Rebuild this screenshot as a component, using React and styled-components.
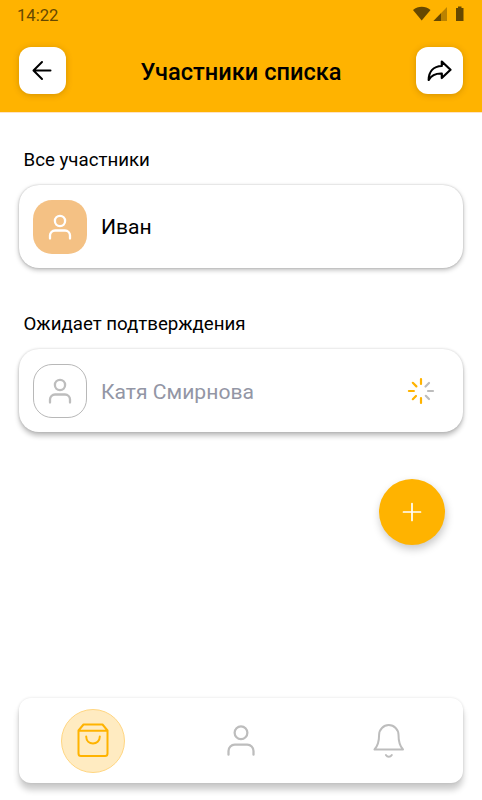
import React from 'react';
import styled, { createGlobalStyle } from 'styled-components';

const GlobalStyle = createGlobalStyle`
  * { box-sizing: border-box; }
  body { margin: 0; background: #fff; font-family: Roboto, sans-serif; color: #000; }
  button { border: 0; padding: 0; font: inherit; cursor: pointer; }
  svg { display: block; fill: none; stroke: currentColor; stroke-linecap: round; stroke-linejoin: round; }
`;

const Screen = styled.div`
  width: 482px;
  height: 800px;
  display: flex;
  flex-direction: column;
  overflow: hidden;
  background: #fff;
`;

const Header = styled.header`
  height: 112px;
  flex: none;
  background: #ffb300;
  box-shadow: 0 1px 0 #ffe3c4;
`;

const StatusBar = styled.div`
  height: 47px;
  padding: 6px 17px 0 17px;
  display: flex;
  align-items: flex-start;
  justify-content: space-between;
  color: #664800;
`;

const Clock = styled.span`
  padding-top: 1px;
  font-size: 16.6px;
  line-height: 18px;
`;

const TitleRow = styled.div`
  display: flex;
  align-items: center;
  justify-content: space-between;
  padding: 0 19px;
`;

const SquareButton = styled.button`
  width: 47px;
  height: 47px;
  display: grid;
  place-items: center;
  border-radius: 12px;
  background: #fff;
  color: #000;
  box-shadow: 0 1px 6px rgba(110, 70, 0, 0.3);
`;

const Title = styled.h1`
  margin: 2px 0 0;
  font-size: 23.6px;
  line-height: 28px;
  font-weight: 500;
  white-space: nowrap;
`;

const Content = styled.main`
  flex: 1;
  display: flex;
  flex-direction: column;
  padding: 38px 19px 0;
`;

const Section = styled.section`
  margin-bottom: 46px;
`;

const SectionTitle = styled.h2`
  margin: 0 0 14px 4.5px;
  font-size: 18.7px;
  line-height: 21px;
  font-weight: 400;
`;

const MemberCard = styled.div`
  height: 83px;
  display: flex;
  align-items: center;
  gap: 14px;
  padding: 0 28px 0 14px;
  border-radius: 20px;
  background: #fff;
  box-shadow: ${({ $pending }) =>
    $pending
      ? '0 4px 5px rgba(0, 0, 0, 0.24), 0 0 3px rgba(0, 0, 0, 0.18)'
      : '0 2px 5px rgba(0, 0, 0, 0.27), 0 0 2px rgba(0, 0, 0, 0.2)'};
`;

const Avatar = styled.div`
  width: 54px;
  height: 54px;
  flex: none;
  display: grid;
  place-items: center;
  border-radius: 19px;
  background: ${({ $pending }) => ($pending ? '#fff' : '#f4c184')};
  color: ${({ $pending }) => ($pending ? '#bdbdbd' : '#fff')};
  border: ${({ $pending }) => ($pending ? '1px solid #b8b8b8' : '0')};
`;

const MemberName = styled.span`
  flex: 1;
  padding-top: ${({ $pending }) => ($pending ? '2px' : '0')};
  font-size: 21.1px;
  line-height: 26px;
  color: ${({ $pending }) => ($pending ? '#9396a5' : '#000')};
`;

const AddButton = styled.button`
  width: 66px;
  height: 66px;
  align-self: flex-end;
  margin: 1px 18.5px 0 0;
  display: grid;
  place-items: center;
  border-radius: 50%;
  background: #ffb300;
  color: #fff;
  box-shadow: 1px 4px 8px rgba(0, 0, 0, 0.22);
`;

const BottomNav = styled.nav`
  height: 85px;
  flex: none;
  margin: 0 19px 17px;
  display: grid;
  grid-template-columns: repeat(3, 1fr);
  align-items: center;
  justify-items: center;
  border-radius: 12px;
  background: #fff;
  box-shadow: 0 7px 6px rgba(0, 0, 0, 0.2), 0 0 3px rgba(0, 0, 0, 0.12);
`;

const NavItem = styled.button`
  width: 64px;
  height: 64px;
  display: grid;
  place-items: center;
  border-radius: 50%;
  background: ${({ $active }) => ($active ? '#ffebc1' : 'transparent')};
  border: ${({ $active }) => ($active ? '1px solid #ffd681' : '1px solid transparent')};
  color: ${({ $active }) => ($active ? '#ffb300' : '#bdbdbd')};
`;

const StatusIcons = () => (
  <svg width="52" height="18" viewBox="0 0 52 18" aria-hidden="true">
    <g stroke="none" fill="currentColor">
      <path d="M0 4C5.200-.200 12.300-.200 17.500 4L8.700 14.500Z" />
      <path d="M34 1V15H20.500Z" opacity=".45" />
      <path d="M28 7.200V15H20.500Z" />
      <path d="M43 2h2V.5h3.500V2h2v13H43Z" />
    </g>
  </svg>
);

const BackIcon = () => (
  <svg width="21" height="21" viewBox="0 0 21 21" strokeWidth="2">
    <path d="M18.500 10.500H2M10 2 1.500 10.500 10 19" />
  </svg>
);

const ShareIcon = () => (
  <svg width="25" height="21" viewBox="0 0 25 21" strokeWidth="2.200">
    <path d="M14.800 1.500 23.500 9.800 14.800 18V13.500C9 13.300 4.500 15.100 1.700 20 1.700 11.500 6.500 6.300 14.800 6Z" />
  </svg>
);

const PersonIcon = ({ large }) => (
  <svg width={large ? 30 : 24} height={large ? 33.75 : 26} viewBox={large ? '0 0 24 27' : '0 0 24 26'} strokeWidth={large ? 1.8 : 2.3}>
    <circle cx="12" cy="7" r="5.100" />
    <path d="M2 24.500v-3a5 5 0 0 1 5-5h10a5 5 0 0 1 5 5v3" />
  </svg>
);

const Spinner = () => (
  <svg width="28" height="28" viewBox="0 0 28 28" strokeWidth="2.200">
    <g color="#bdbdbd" stroke="currentColor">
      <path d="M21 14h5M18.500 9.500l3.500-3.500M18.800 18.800l3.200 3.200" />
    </g>
    <g color="#ffb300" stroke="currentColor">
      <path d="M14 2v5M14 21v5M1.900 14h5M5.800 5.800l3.600 3.600M5.800 22.200l3.200-3.200" />
    </g>
  </svg>
);

const PlusIcon = () => (
  <svg width="20" height="20" viewBox="0 0 20 20" strokeWidth="1.700">
    <path d="M10 1.500v17M1.500 10h17" />
  </svg>
);

const BagIcon = () => (
  <svg width="32" height="35" viewBox="0 0 32 35" strokeWidth="2">
    <path d="M6.500 1.500h19l5 6v23a2.500 2.500 0 0 1-2.500 2.500H4a2.500 2.500 0 0 1-2.500-2.500v-23ZM1.500 7.700h29M9.200 13.500c0 9.200 13.600 9.200 13.600 0" />
  </svg>
);

const BellIcon = () => (
  <svg width="32" height="34" viewBox="0 0 32 34" strokeWidth="2">
    <path d="M1.500 25.500h28.500c-3.500-3.700-4.500-7.500-4.500-14.700a9.700 9.700 0 0 0-19.400 0c0 7.200-1.100 11-4.600 14.700ZM12.900 31c1.500 2.400 4.400 2.400 5.900 0" />
  </svg>
);

export default function App() {
  return (
    <Screen>
      <GlobalStyle />
      <Header>
        <StatusBar>
          <Clock>14:22</Clock>
          <StatusIcons />
        </StatusBar>
        <TitleRow>
          <SquareButton aria-label="Назад"><BackIcon /></SquareButton>
          <Title>Участники списка</Title>
          <SquareButton aria-label="Поделиться"><ShareIcon /></SquareButton>
        </TitleRow>
      </Header>
      <Content>
        <Section>
          <SectionTitle>Все участники</SectionTitle>
          <MemberCard>
            <Avatar><PersonIcon /></Avatar>
            <MemberName>Иван</MemberName>
          </MemberCard>
        </Section>
        <Section>
          <SectionTitle>Ожидает подтверждения</SectionTitle>
          <MemberCard $pending>
            <Avatar $pending><PersonIcon /></Avatar>
            <MemberName $pending>Катя Смирнова</MemberName>
            <Spinner />
          </MemberCard>
        </Section>
        <AddButton aria-label="Добавить"><PlusIcon /></AddButton>
      </Content>
      <BottomNav>
        <NavItem $active aria-label="Списки"><BagIcon /></NavItem>
        <NavItem aria-label="Профиль"><PersonIcon large /></NavItem>
        <NavItem aria-label="Уведомления"><BellIcon /></NavItem>
      </BottomNav>
    </Screen>
  );
}
